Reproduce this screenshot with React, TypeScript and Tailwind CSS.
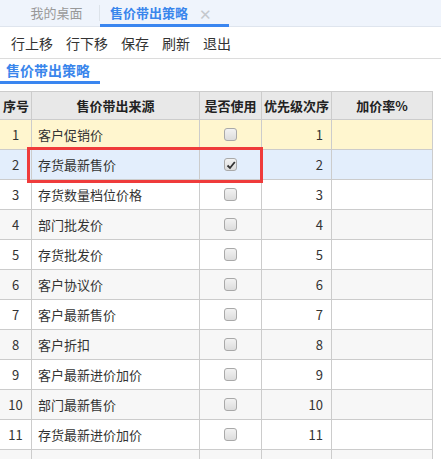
const rows = [
  { no: 1, name: "客户促销价", checked: false },
  { no: 2, name: "存货最新售价", checked: true },
  { no: 3, name: "存货数量档位价格", checked: false },
  { no: 4, name: "部门批发价", checked: false },
  { no: 5, name: "存货批发价", checked: false },
  { no: 6, name: "客户协议价", checked: false },
  { no: 7, name: "客户最新售价", checked: false },
  { no: 8, name: "客户折扣", checked: false },
  { no: 9, name: "客户最新进价加价", checked: false },
  { no: 10, name: "部门最新售价", checked: false },
  { no: 11, name: "存货最新进价加价", checked: false },
  { no: 12, name: "", checked: false },
];

function Check({ checked }: { checked: boolean }) {
  return (
    <span className="relative inline-block h-[13px] w-[13px] rounded-[3px] border border-[#a9a9a9] bg-gradient-to-b from-[#f2f2f2] to-[#dcdcdc]">
      {checked && (
        <svg className="absolute left-[1px] top-[1px] h-[10px] w-[10px]" viewBox="0 0 10 10">
          <path d="M1.5 5.5 L4 8 L8.8 2" fill="none" stroke="#333" strokeWidth={1.8} />
        </svg>
      )}
    </span>
  );
}

function rowBg(no: number) {
  if (no === 1) return "bg-[#fff6cf]";
  if (no === 2) return "bg-[#e3eefc]";
  return no % 2 === 0 ? "bg-[#f7f7f7]" : "bg-white";
}

export default function App() {
  return (
    <div
      className="h-[459px] w-[441px] overflow-hidden bg-white text-[13px] leading-[18px] text-[#333]"
      style={{ fontFamily: '"Noto Sans CJK SC", "Noto Sans", sans-serif' }}
    >
      {/* tabs */}
      <div className="flex h-[27px] items-stretch border-b border-[#dfe5ee] bg-[#eff4fc]">
        <div className="flex w-[99px] items-center justify-center pl-[14px] text-[#999]">我的桌面</div>
        <div className="my-[5px] w-px bg-[#dde3ea]" />
        <div className="relative flex w-[129px] items-center pl-[10px] font-bold text-[#3a86ec]">
          售价带出策略
          <span className="ml-[11px] text-[15px] font-normal leading-none text-[#c4c8cd]">✕</span>
          <div className="absolute bottom-[-1px] left-0 right-0 h-[3px] bg-[#3a86f0]" />
        </div>
      </div>

      {/* toolbar */}
      <div className="flex h-[32px] items-center gap-[13px] border-b border-[#dcdcdc] pl-[11px] text-[14px] text-[#333]">
        <span>行上移</span>
        <span>行下移</span>
        <span>保存</span>
        <span>刷新</span>
        <span>退出</span>
      </div>

      {/* sub tab */}
      <div className="relative w-[100px] pb-[4px] pl-[6px] pt-[1px] text-[14px] font-bold leading-[20px] text-[#3a86ec]">
        售价带出策略
        <div className="absolute bottom-0 left-0 h-[3px] w-[100px] bg-[#3a86f0]" />
      </div>

      {/* grid */}
      <div className="relative mt-[7px] w-[433px]">
        <div className="grid grid-cols-[32px_168px_62px_70px_101px] border-t border-[#cccccc] bg-[#e8e8e8] font-bold text-[#222]">
          <div className="flex h-[28px] items-center border-b border-r border-[#cccccc] pl-[3px]">序号</div>
          <div className="flex items-center justify-center border-b border-r border-[#cccccc]">售价带出来源</div>
          <div className="flex items-center justify-center whitespace-nowrap border-b border-r border-[#cccccc]">是否使用</div>
          <div className="flex items-center justify-center whitespace-nowrap border-b border-r border-[#cccccc]">优先级次序</div>
          <div className="flex items-center justify-center border-b border-r border-[#cccccc]">加价率%</div>
        </div>
        {rows.map((r) => (
          <div key={r.no} className={`grid grid-cols-[32px_168px_62px_70px_101px] ${rowBg(r.no)}`}>
            <div className="flex h-[30px] items-center justify-center border-b border-r border-[#cccccc]">{r.name ? r.no : ""}</div>
            <div className="flex items-center border-b border-r border-[#cccccc] pl-[6px]">{r.name}</div>
            <div className="flex items-center justify-center border-b border-r border-[#cccccc]">
              {r.name && <Check checked={r.checked} />}
            </div>
            <div className="flex items-center justify-end border-b border-r border-[#cccccc] pr-[8px]">{r.name ? r.no : ""}</div>
            <div className="border-b border-r border-[#cccccc]" />
          </div>
        ))}
        {/* highlight around row 2 */}
        <div className="pointer-events-none absolute left-[27px] top-[56px] z-10 h-[36px] w-[236px] border-[3px] border-[#ef3b3b]" />
      </div>
    </div>
  );
}
